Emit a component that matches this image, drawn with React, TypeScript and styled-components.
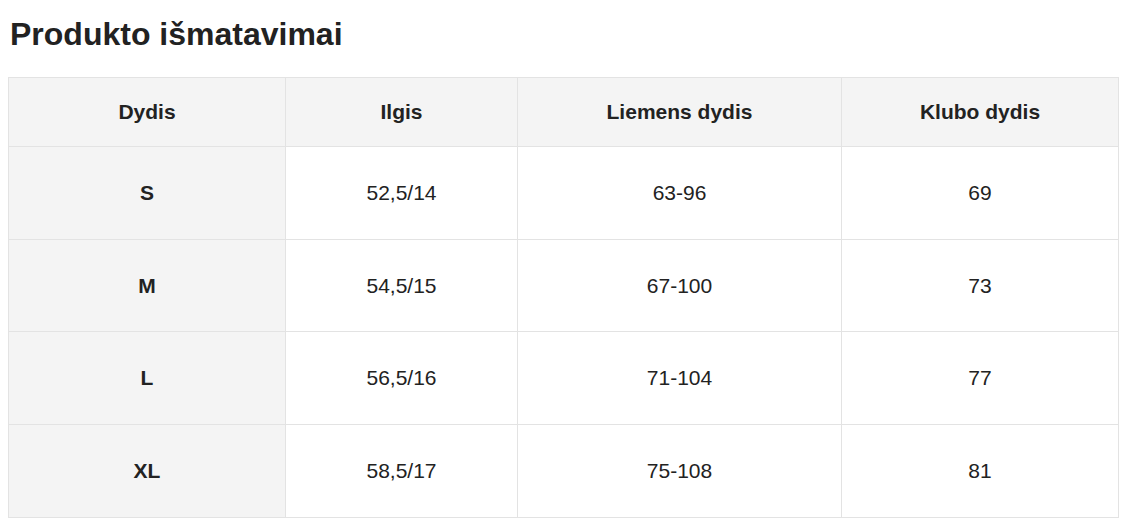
import React from "react";
import styled, { createGlobalStyle } from "styled-components";

const GlobalStyle = createGlobalStyle`
	html, body {
		margin: 0;
		padding: 0;
		background: #fff;
	}
	body {
		font-family: "Liberation Sans", Arial, sans-serif;
		color: #222;
	}
`;

const Wrapper = styled.div`
	padding: 16px 8px 0 8px;
`;

const Title = styled.h2`
	margin: 0 0 24px 2px;
	font-size: 32px;
	font-weight: 700;
	line-height: 37px;
	color: #222;
`;

const Table = styled.table`
	width: 1110px;
	border-collapse: collapse;
	table-layout: fixed;
	font-size: 21px;
`;

const Row = styled.tr<{ $height: number }>`
	height: ${p => p.$height}px;
`;

const HeadCell = styled.th`
	background: #f4f4f4;
	border: 1px solid #e3e3e3;
	font-weight: 700;
	text-align: center;
	vertical-align: middle;
	padding: 0;
`;

const Cell = styled.td<{ $label?: boolean }>`
	background: ${p => (p.$label ? "#f4f4f4" : "#fff")};
	border: 1px solid #e3e3e3;
	font-weight: ${p => (p.$label ? 700 : 400)};
	text-align: center;
	vertical-align: middle;
	padding: 0;
`;

const columns = ["Dydis", "Ilgis", "Liemens dydis", "Klubo dydis"];
const widths = [277, 232, 324, 277];

const rows = [
	["S", "52,5/14", "63-96", "69"],
	["M", "54,5/15", "67-100", "73"],
	["L", "56,5/16", "71-104", "77"],
	["XL", "58,5/17", "75-108", "81"],
];
const rowHeights = [93, 92, 93, 93];

const App: React.FC = () => {
	return (
		<Wrapper>
			<GlobalStyle />
			<Title>Produkto išmatavimai</Title>
			<Table>
				<colgroup>
					{widths.map((w, i) => (
						<col key={i} style={{ width: w }} />
					))}
				</colgroup>
				<thead>
					<Row $height={69}>
						{columns.map(c => (
							<HeadCell key={c}>{c}</HeadCell>
						))}
					</Row>
				</thead>
				<tbody>
					{rows.map((r, i) => (
						<Row key={r[0]} $height={rowHeights[i]}>
							{r.map((v, j) => (
								<Cell key={j} $label={j === 0}>{v}</Cell>
							))}
						</Row>
					))}
				</tbody>
			</Table>
		</Wrapper>
	);
};

export default App;
